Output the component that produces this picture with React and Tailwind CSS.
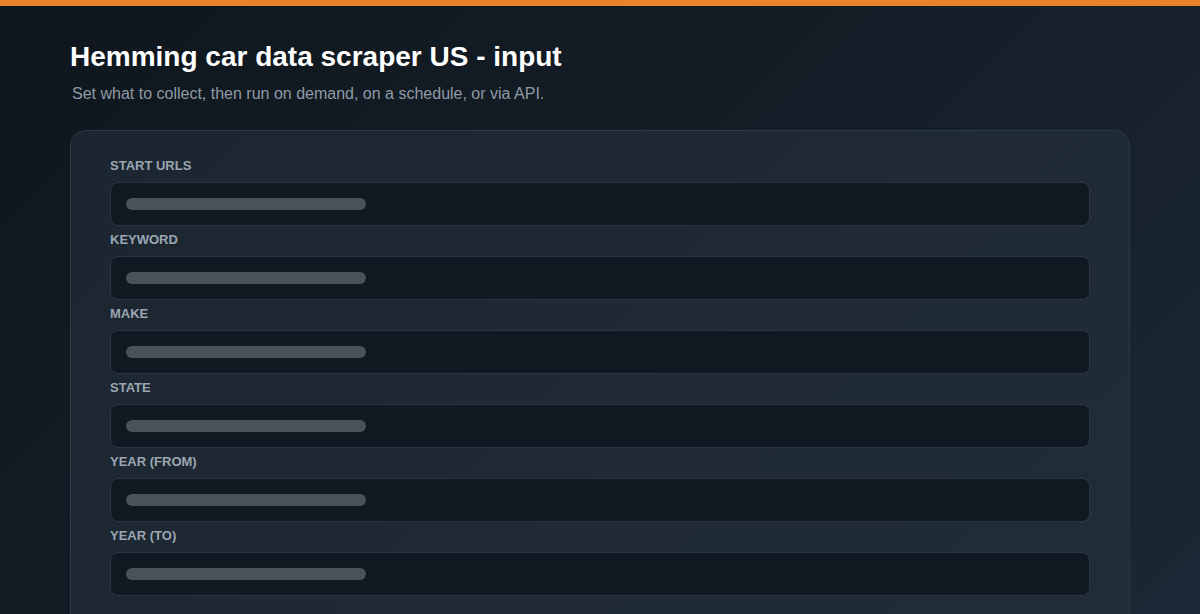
export default function App() {
  const fields = ["START URLS", "KEYWORD", "MAKE", "STATE", "YEAR (FROM)", "YEAR (TO)"];
  return (
    <div
      className="w-[1200px] h-[614px] overflow-hidden bg-[linear-gradient(135deg,#0f161d_0%,#141d26_45%,#1b2835_100%)]"
      style={{ fontFamily: '"Liberation Sans", Arial, sans-serif' }}
    >
      <div className="h-[6px] bg-[#e8832a]" />
      <div className="px-[70px]">
        <h1 className="mt-[35px] text-[28px] leading-[32px] font-bold text-white">Hemming car data scraper US - input</h1>
        <p className="mt-[11px] text-[16px] leading-[20px] text-[#8f9aa6] pl-[2px]">
          Set what to collect, then run on demand, on a schedule, or via API.
        </p>
        <div className="mt-[26px] h-[600px] rounded-[16px] border border-[#2b3846] bg-[linear-gradient(135deg,#1c2630_0%,#212d39_100%)] px-[39px] pt-[27px]">
          {fields.map((f) => (
            <div key={f} className="mb-[6px]">
              <div className="text-[13px] leading-[16px] font-bold text-[#9ba6b2]">{f}</div>
              <div className="mt-[8px] h-[44px] rounded-[8px] border border-[#2a3643] bg-[#111821] flex items-center pl-[15px]">
                <div className="h-[12px] w-[240px] rounded-full bg-[#4a5159]" />
              </div>
            </div>
          ))}
        </div>
      </div>
    </div>
  );
}
